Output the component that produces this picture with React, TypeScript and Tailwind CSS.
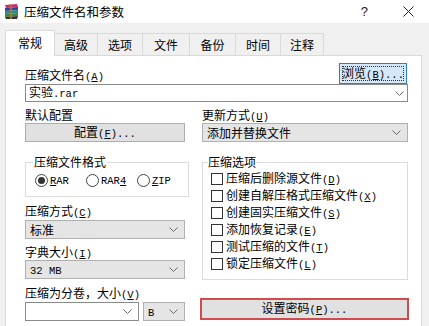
import React from "react";

const M = ({ children }: { children: React.ReactNode }) => (
  <span className="font-['Liberation_Mono','Noto_Sans_CJK_SC',monospace] text-[10.5px]">{children}</span>
);

function Hot({ cn, k, dots }: { cn: string; k: string; dots?: boolean }) {
  return (
    <span className="whitespace-nowrap">
      {cn}
      <M>
        (<span className="underline">{k}</span>){dots ? "..." : ""}
      </M>
    </span>
  );
}

const Chev = () => (
  <svg width="9" height="5" viewBox="0 0 9 5" className="shrink-0">
    <path d="M0.5 0.5L4.5 4.5L8.5 0.5" fill="none" stroke="#6a6a6a" strokeWidth="1" />
  </svg>
);

function Select({ children, white, className }: { children?: React.ReactNode; white?: boolean; className?: string }) {
  return (
    <div
      className={`flex items-center justify-between h-[19px] border pl-[4px] pr-[6px] whitespace-nowrap ${
        white ? "bg-white border-[#8a8a8a]" : "bg-[#e5e5e5] border-[#b0b0b0]"
      } ${className ?? ""}`}
    >
      <span>{children}</span>
      <Chev />
    </div>
  );
}

const Radio = ({ on }: { on?: boolean }) => (
  <span className="w-[13px] h-[13px] rounded-full border border-[#444] bg-white flex items-center justify-center shrink-0">
    {on && <span className="w-[7px] h-[7px] rounded-full bg-[#333]" />}
  </span>
);

const Check = ({ children }: { children: React.ReactNode }) => (
  <div className="flex items-center h-[17px] gap-[3px] ml-[3px]">
    <span className="w-[12px] h-[12px] border border-[#333] bg-white shrink-0" />
    {children}
  </div>
);

const Icon = () => (
  <svg width="17" height="17" viewBox="0 0 17 17">
    <path d="M2 2 L14 1 L15 4 L3 5 Z" fill="#c0306a" />
    <path d="M2 5 L15 4 L15 7 L2 8 Z" fill="#3a3f9a" />
    <path d="M2 8 L15 7 L15 10 L2 11 Z" fill="#2a8a8a" />
    <path d="M2 11 L15 10 L15 13 L2 14 Z" fill="#3a8a3a" />
    <path d="M2 14 L15 13 L14 16 L3 16 Z" fill="#333" />
    <rect x="7" y="1" width="2" height="15" fill="#b07a3a" opacity="0.8" />
  </svg>
);

export default function App() {
  const tabs: { t: string; cls: string }[] = [
    { t: "高级", cls: "w-[43px]" },
    { t: "选项", cls: "w-[45px]" },
    { t: "文件", cls: "w-[47px]" },
    { t: "备份", cls: "w-[46px]" },
    { t: "时间", cls: "w-[45px]" },
    { t: "注释", cls: "w-[43px]" },
  ];
  return (
    <div className="w-[429px] h-[326px] bg-[#f0f0f0] overflow-hidden text-[12px] leading-[14px] text-black font-['Noto_Sans_CJK_SC',sans-serif]">
      {/* title bar */}
      <div className="h-[23px] bg-white flex items-center">
        <div className="ml-[3px] w-[17px] h-[17px]">
          <Icon />
        </div>
        <span className="ml-[4px] text-[12.5px]">压缩文件名和参数</span>
        <span className="ml-auto text-[13px] font-['Liberation_Sans',sans-serif] text-[#222]">?</span>
        <svg width="11" height="11" viewBox="0 0 11 11" className="ml-[35px] mr-[15px]">
          <path d="M0.5 0.5L10.5 10.5M10.5 0.5L0.5 10.5" stroke="#222" strokeWidth="1" />
        </svg>
      </div>

      {/* tabs */}
      <div className="mt-[7px] ml-[5px] flex items-end relative z-10">
        <div className="w-[50px] h-[26px] bg-white border border-b-0 border-[#d9d9d9] flex items-center justify-center pb-[2px]">
          常规
        </div>
        {tabs.map((tb) => (
          <div
            key={tb.t}
            className={`${tb.cls} h-[23px] bg-[#f0f0f0] border-t border-r border-b border-[#d9d9d9] flex items-center justify-center`}
          >
            {tb.t}
          </div>
        ))}
      </div>

      {/* panel */}
      <div className="relative -mt-px ml-[5px] w-[417px] h-[280px] bg-white border border-[#d9d9d9] pl-[19px] pr-[13px] pt-[7px]">
        <div className="flex justify-between items-center h-[21px]">
          <span className="mt-[4px]">
            <Hot cn="压缩文件名" k="A" />
          </span>
          <div className="w-[68px] h-[21px] bg-[#d6e8f8] border border-[#2b7fd0] p-[2px] mr-px">
            <div className="w-full h-full border border-dotted border-[#333] flex items-center justify-center">
              <Hot cn="浏览" k="B" dots />
            </div>
          </div>
        </div>
        <div className="h-[18px] border border-[#8a8a8a] bg-white flex items-center justify-between pl-[3px] pr-[3px]">
          <span>
            实验<M>.rar</M>
          </span>
          <Chev />
        </div>

        <div className="flex gap-[17px] mt-[5px]">
          {/* left column */}
          <div className="w-[160px] flex flex-col">
            <div className="h-[16px] leading-[16px]">默认配置</div>
            <div className="h-[19px] bg-[#e1e1e1] border border-[#adadad] flex items-center justify-center">
              <Hot cn="配置" k="F" dots />
            </div>
            <fieldset className="mt-[12px] border border-[#dcdcdc] pl-[7px] pb-[7px]">
              <legend className="px-[1px] h-[16px] leading-[16px]">压缩文件格式</legend>
              <div className="pt-[2px] h-[19px] flex items-center ml-[2px]">
                <div className="w-[51px] flex items-center gap-[2px]">
                  <Radio on />
                  <M>
                    <span className="underline">R</span>AR
                  </M>
                </div>
                <div className="w-[51px] flex items-center gap-[2px]">
                  <Radio />
                  <M>
                    RAR<span className="underline">4</span>
                  </M>
                </div>
                <div className="w-[51px] flex items-center gap-[2px]">
                  <Radio />
                  <M>
                    <span className="underline">Z</span>IP
                  </M>
                </div>
              </div>
            </fieldset>
            <div className="mt-[7px] h-[14px]">
              <Hot cn="压缩方式" k="C" />
            </div>
            <Select className="mt-[2px]">标准</Select>
            <div className="mt-[6px] h-[14px]">
              <Hot cn="字典大小" k="I" />
            </div>
            <Select className="mt-[1px]">
              <M>32 MB</M>
            </Select>
            <div className="mt-[7px] h-[14px]">
              <Hot cn="压缩为分卷，大小" k="V" />
            </div>
            <div className="mt-[2px] flex gap-[4px]">
              <Select white className="w-[114px]" />
              <Select className="w-[42px]">
                <M>B</M>
              </Select>
            </div>
          </div>

          {/* right column */}
          <div className="w-[206px] flex flex-col">
            <div className="h-[16px] leading-[16px]">
              <Hot cn="更新方式" k="U" />
            </div>
            <Select>添加并替换文件</Select>
            <fieldset className="mt-[12px] border border-[#dcdcdc] pl-[5px] pb-[7px]">
              <legend className="px-0 h-[16px] leading-[16px]">压缩选项</legend>
              <Check>
                <Hot cn="压缩后删除源文件" k="D" />
              </Check>
              <Check>
                <Hot cn="创建自解压格式压缩文件" k="X" />
              </Check>
              <Check>
                <Hot cn="创建固实压缩文件" k="S" />
              </Check>
              <Check>
                <Hot cn="添加恢复记录" k="E" />
              </Check>
              <Check>
                <Hot cn="测试压缩的文件" k="T" />
              </Check>
              <Check>
                <Hot cn="锁定压缩文件" k="L" />
              </Check>
            </fieldset>
            <div className="mt-[18px] -ml-[2px] w-[209px] h-[22px] border-2 border-[#d04a4f] bg-[#e1e1e1] flex items-center justify-center">
              <Hot cn="设置密码" k="P" dots />
            </div>
          </div>
        </div>
      </div>
    </div>
  );
}
